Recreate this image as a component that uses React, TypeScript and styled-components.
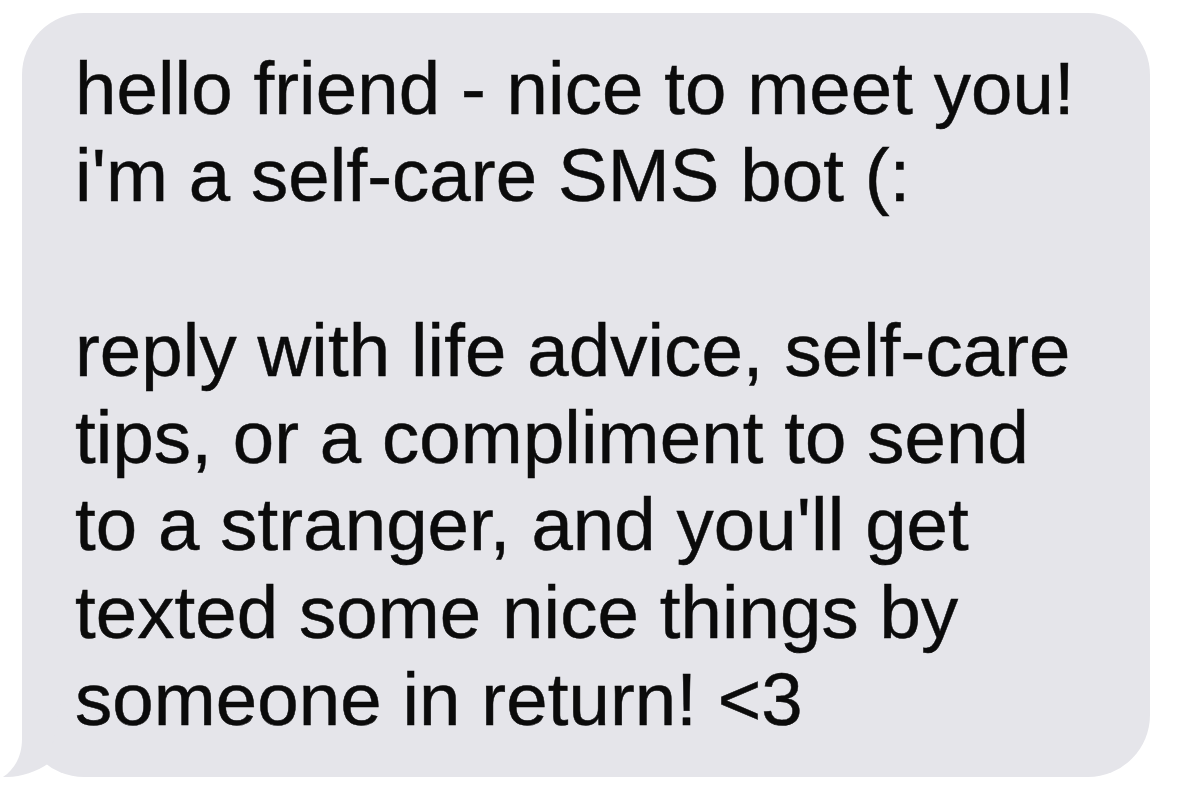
import React from "react";
import styled, { createGlobalStyle } from "styled-components";

const GlobalStyle = createGlobalStyle`
  html, body {
    margin: 0;
    padding: 0;
    background: #ffffff;
  }
  body {
    font-family: "Liberation Sans", Arial, Helvetica, sans-serif;
  }
`;

const BUBBLE = "#e5e5ea";

const Page = styled.main`
  width: 1184px;
  height: 790px;
  box-sizing: border-box;
  padding: 13px 34px 0 22px;
  background: #ffffff;
  overflow: hidden;
`;

const Bubble = styled.div`
  position: relative;
  box-sizing: border-box;
  width: 1128px;
  height: 764px;
  padding: 32px 36px 0 53px;
  background: ${BUBBLE};
  border-radius: 62px;
`;

const Tail = styled.svg`
  position: absolute;
  left: -22px;
  bottom: 0;
  width: 80px;
  height: 90px;
  display: block;
`;

const MessageText = styled.p`
  position: relative;
  margin: 0;
  font-family: "Liberation Sans", Arial, Helvetica, sans-serif;
  font-size: 74.4px;
  line-height: 87.3px;
  color: #0b0b0b;
  white-space: pre;
  letter-spacing: 0.1px;
  -webkit-text-stroke: 0.5px #0b0b0b;
`;

const message = `hello friend - nice to meet you!
i'm a self-care SMS bot (:

reply with life advice, self-care
tips, or a compliment to send
to a stranger, and you'll get
texted some nice things by
someone in return! <3`;

export default function App() {
  return (
    <>
      <GlobalStyle />
      <Page>
        <Bubble>
          <Tail viewBox="0 0 80 90" aria-hidden="true">
            <path
              d="M22 8 L22 52 C22 69 15 82 3 90 C18 90.5 35 86 49 76 L62 8 Z"
              fill={BUBBLE}
            />
          </Tail>
          <MessageText>{message}</MessageText>
        </Bubble>
      </Page>
    </>
  );
}
